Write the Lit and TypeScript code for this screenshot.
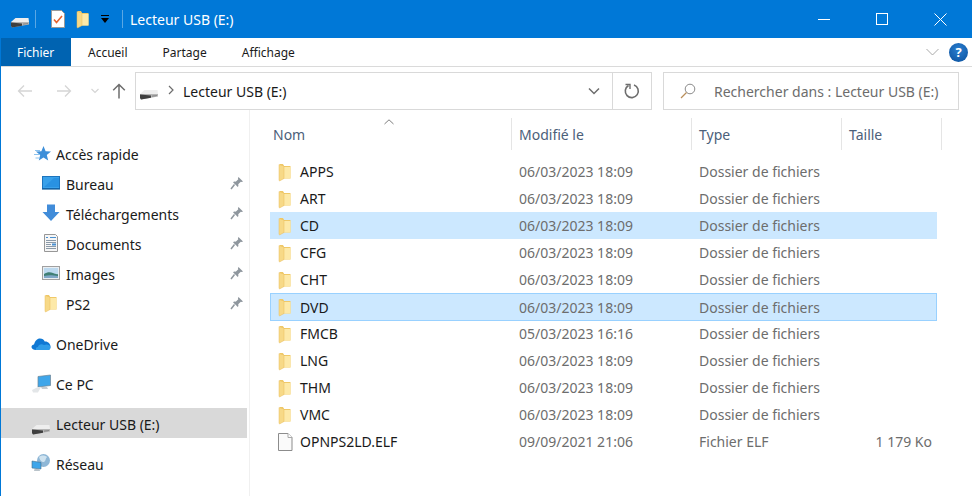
import { html, css, svg, LitElement } from "lit";
import { customElement } from "lit/decorators.js";

const driveIcon = svg`<svg class="ico" width="20" height="20" viewBox="0 0 20 20"><path d="M1 13 5.500 9H18.500l.5 4z" fill="#eeeeee"/><path d="M1 13l18 0v2.500L2 18.500 1 17z" fill="#b5b5b5"/><path d="M1 13.500l11 1v2.200L2 18.500 1 17z" fill="#3f3f3f"/><path d="M13 14.500l5-.5v1l-5 .7z" fill="#8a8a8a"/></svg>`;

const folderIcon = svg`<svg class="ico" width="14" height="20" viewBox="0 0 14 20"><path d="M2 2h3l1 2h6.500v12.500H2z" fill="#f0c968"/><path d="M6 5h6.500v11.500H6z" fill="#fde9a8"/><path d="M1 2.500 6 4v12.500L1.500 19 1 18z" fill="#f7d987"/><path d="M1 2.500 6 4v12.500L1.500 19 1 18z" fill="none" stroke="#e8bd5c" stroke-width=".5"/></svg>`;

const fileIcon = svg`<svg class="ico" width="15" height="20" viewBox="0 0 15 20"><path d="M.5 1.500h9.500l4 4v13H.5z" fill="#fafafa" stroke="#8c8c8c"/><path d="M10 1.500v4h4" fill="#fff" stroke="#a8a8a8"/></svg>`;

const pinIcon = svg`<svg width="14" height="14" viewBox="0 0 14 14"><path d="M8.500 1 13 5.500l-1.200.6-1-.4L8.200 8.300c.4 1.100.2 2-.4 2.700L3 6.200c.7-.6 1.600-.8 2.700-.4l2.600-2.600-.4-1z" fill="#8f979e"/><path d="M4.500 8.500 1 13" stroke="#8f979e" stroke-width="1.500"/></svg>`;

const navIcons: Record<string, unknown> = {
  star: svg`<svg class="ico" width="20" height="20" viewBox="0 0 20 20"><path d="M12.500 3 14.600 8.200 20 8.500 15.800 12.100 17.200 17.500 12.500 14.500 7.800 17.500 9.200 12.100 4.900 8.500 10.400 8.200z" fill="#3d8fd9"/><path d="M4 7.500h5M3 11.500h6M4.500 15h4" stroke="#8cc1ec" stroke-width="1"/></svg>`,
  desktop: svg`<svg class="ico" width="20" height="20" viewBox="0 0 20 20"><rect x="1.500" y="3.500" width="17" height="12" fill="#39a1ea" stroke="#1d74bd"/><path d="M1 16h18" stroke="#0f5c99" stroke-width="1.200"/><path d="M3 14 13 5h5v9z" fill="#1f88dc" opacity=".6"/></svg>`,
  download: svg`<svg class="ico" width="20" height="20" viewBox="0 0 20 20"><path d="M6 1.500h8V9h4.500L10 18 1.500 9H6z" fill="#418cd9"/></svg>`,
  docs: svg`<svg class="ico" width="20" height="20" viewBox="0 0 20 20"><path d="M3.500 1.500h11l2 2v15h-13z" fill="#f6f6f6" stroke="#979797"/><path d="M5 4.500h2M9 4.500h6" stroke="#4a90d0"/><path d="M5 7.500h10M5 9.500h10M5 11.500h5M5 13.500h10M5 15.500h10" stroke="#8b9aa8"/><rect x="11" y="10.500" width="4" height="2" fill="#4a90d0"/></svg>`,
  images: svg`<svg class="ico" width="20" height="20" viewBox="0 0 20 20"><rect x="1.500" y="3.500" width="17" height="13" fill="#e9eef2" stroke="#a0a0a0"/><rect x="3" y="5" width="14" height="10" fill="#bcd9ef"/><path d="M3 11c3-2 6-2.500 9-1 2 1 4 1.500 5 1v4H3z" fill="#3f7f74"/><path d="M3 13c4-1 8-1 14 0v2H3z" fill="#7fa7c7"/></svg>`,
  cloud: svg`<svg class="ico" width="20" height="20" viewBox="0 0 20 20"><path d="M5 17c-3 0-4.500-1.500-4.500-3 0-1.500 1.200-2.500 2.500-2.600C4 8 6 5.500 9 5.500c2.300 0 4 1.300 4.700 3 3.400-.3 5.800 2.500 5.800 5 0 1.800-1 3.500-3 3.500z" fill="#0f78d4"/><path d="M5 17h12.500c1.400 0 2-1.300 2-3-.5-2-3.500-3.500-6.500-2-2.500-1.500-5.500-.5-6 2-2 0-2.500 1.500-2 3z" fill="#2f9ce8"/></svg>`,
  pc: svg`<svg class="ico" width="20" height="20" viewBox="0 0 20 20"><path d="M7 3.500 19.500 2v10.500L7 14z" fill="#3fa6ea" stroke="#6d8494" stroke-width=".7"/><path d="M10 14h6l1 2h-6z" fill="#c6ccd1"/><path d="M1 17l6-3h3L7 19.500H2z" fill="#e3e6e8"/></svg>`,
  net: svg`<svg class="ico" width="20" height="20" viewBox="0 0 20 20"><circle cx="12.500" cy="7.500" r="6.500" fill="#8fb7d6"/><path d="M8 4c2-2 6-2 8 0-2 2-1 4-3 5-2 .5-4-1-5-5z" fill="#cfe3f0"/><path d="M1 8l9 1.500v6.500l-9-1z" fill="#3fa6ea" stroke="#47708c" stroke-width=".6"/><path d="M3.500 16h5l.5 2h-6z" fill="#b9c3ca"/></svg>`,
};

interface NavRow { icon: unknown; label: string; pinned?: boolean; active?: boolean; child?: boolean }

const navGroups: NavRow[][] = [
  [
    { icon: navIcons.star, label: "Accès rapide" },
    { icon: navIcons.desktop, label: "Bureau", pinned: true, child: true },
    { icon: navIcons.download, label: "Téléchargements", pinned: true, child: true },
    { icon: navIcons.docs, label: "Documents", pinned: true, child: true },
    { icon: navIcons.images, label: "Images", pinned: true, child: true },
    { icon: folderIcon, label: "PS2", pinned: true, child: true },
  ],
  [{ icon: navIcons.cloud, label: "OneDrive" }],
  [{ icon: navIcons.pc, label: "Ce PC" }],
  [{ icon: driveIcon, label: "Lecteur USB (E:)", active: true }],
  [{ icon: navIcons.net, label: "Réseau" }],
];

const folders: [string, string][] = [
  ["APPS", "06/03/2023 18:09"],
  ["ART", "06/03/2023 18:09"],
  ["CD", "06/03/2023 18:09"],
  ["CFG", "06/03/2023 18:09"],
  ["CHT", "06/03/2023 18:09"],
  ["DVD", "06/03/2023 18:09"],
  ["FMCB", "05/03/2023 16:16"],
  ["LNG", "06/03/2023 18:09"],
  ["THM", "06/03/2023 18:09"],
  ["VMC", "06/03/2023 18:09"],
];

@customElement("app-root")
export class AppRoot extends LitElement {
  static styles = css`
    :host {
      display: flex;
      flex-direction: column;
      width: 972px;
      height: 496px;
      overflow: hidden;
      background: #fff;
      box-sizing: border-box;
      border-left: 1px solid #0078d7;
      font-family: "Noto Sans", sans-serif;
      font-size: 14px;
      color: #1a1a1a;
    }

    .ico {
      display: block;
      flex-shrink: 0;
    }

    .titlebar {
      display: flex;
      align-items: center;
      height: 38px;
      flex-shrink: 0;
      background: #0078d7;
      color: #fff;
      padding-left: 9px;
    }

    .qa {
      display: flex;
      align-items: center;
    }

    .vsep {
      width: 1px;
      height: 18px;
      background: #5aa7e4;
    }

    .vsep.first {
      margin: 0 14px 0 5px;
    }

    .vsep.last {
      margin: 0 9px 0 11px;
    }

    .gap-10 {
      width: 10px;
    }

    .gap-9 {
      width: 9px;
    }

    .title {
      margin-left: -2px;
    }

    .winbtns {
      margin-left: auto;
      display: flex;
      align-items: center;
      gap: 46px;
      padding-right: 25px;
    }

    .ribbon {
      display: flex;
      align-items: stretch;
      height: 28px;
      flex-shrink: 0;
      border-bottom: 1px solid #dadada;
      font-size: 12px;
    }

    .tab {
      display: flex;
      align-items: center;
      margin-right: 35px;
    }

    .tab.file {
      width: 70px;
      box-sizing: border-box;
      padding-left: 16px;
      background: #0063b1;
      color: #fff;
      margin-right: 17px;
    }

    .ribbon-end {
      margin-left: auto;
      display: flex;
      align-items: center;
      gap: 10px;
      padding-right: 4px;
    }

    .help {
      width: 19px;
      height: 19px;
      border-radius: 50%;
      background: radial-gradient(circle at 50% 35%, #2a7fd0, #0a4f9c);
      color: #fff;
      font-size: 13px;
      font-weight: 700;
      display: flex;
      align-items: center;
      justify-content: center;
    }

    .addressbar {
      display: flex;
      align-items: center;
      height: 38px;
      flex-shrink: 0;
      padding-top: 5px;
    }

    .navbtns {
      display: flex;
      align-items: center;
      width: 134px;
      flex-shrink: 0;
      padding-left: 16px;
      box-sizing: border-box;
    }

    .address {
      width: 517px;
      height: 38px;
      box-sizing: border-box;
      border: 1px solid #d9d9d9;
      display: flex;
      align-items: center;
      padding-left: 3px;
    }

    .crumb {
      margin: -2px 0 0 9px;
    }

    .address .text {
      margin-left: 9px;
    }

    .addr-end {
      margin-left: auto;
      display: flex;
      align-items: center;
      height: 100%;
    }

    .addr-chevron {
      margin-right: 12px;
    }

    .addr-refresh {
      width: 38px;
      height: 100%;
      border-left: 1px solid #d9d9d9;
      display: flex;
      align-items: center;
      justify-content: center;
    }

    .search {
      margin-left: 11px;
      width: 296px;
      height: 38px;
      box-sizing: border-box;
      border: 1px solid #d9d9d9;
      display: flex;
      align-items: center;
      padding-left: 16px;
      color: #6d6d6d;
      gap: 18px;
    }

    .main {
      flex: 1;
      display: flex;
      min-height: 0;
    }

    .sidebar {
      width: 249px;
      flex-shrink: 0;
      box-sizing: border-box;
      border-right: 1px solid #f0f0f0;
      padding-top: 28px;
    }

    .nav-group {
      margin-bottom: 10px;
    }

    .nav-row {
      display: flex;
      align-items: center;
      height: 30px;
      width: 246px;
      box-sizing: border-box;
      padding-left: 30px;
      gap: 5px;
    }

    .nav-row.child {
      padding-left: 40px;
    }

    .nav-row.active {
      background: #d9d9d9;
    }

    .nav-icon {
      width: 20px;
      display: flex;
      justify-content: center;
      flex-shrink: 0;
    }

    .nav-row.active .nav-icon {
      margin-top: 6px;
    }

    .nav-label {
      padding-top: 2px;
    }

    .nav-row .pin {
      margin-left: auto;
      margin-right: 3px;
      display: flex;
    }

    .content {
      flex: 1;
      min-width: 0;
      padding-left: 20px;
    }

    .head {
      display: grid;
      grid-template-columns: 242px 180px 150px 100px;
      height: 32px;
      margin-top: 8px;
      margin-bottom: 8px;
      color: #4c607a;
    }

    .head > div {
      display: flex;
      align-items: center;
      padding-left: 7px;
      box-sizing: border-box;
      border-right: 1px solid #e5e5e5;
      position: relative;
    }

    .head > .col-name {
      padding-left: 3px;
    }

    .sort {
      position: absolute;
      left: 114px;
      top: 1px;
    }

    .row {
      height: 27px;
      width: 667px;
      box-sizing: border-box;
      display: grid;
      grid-template-columns: 241px 180px 150px 96px;
      align-items: center;
    }

    .row.sel {
      background: #cce8ff;
    }

    .row.focus {
      height: 28px;
      margin-bottom: -1px;
      box-shadow: inset 0 0 0 1px #99d1ff;
      position: relative;
    }

    .row .name {
      display: flex;
      align-items: center;
      gap: 8px;
      padding-left: 8px;
    }

    .file-box {
      width: 14px;
    }

    .row .muted {
      color: #6d6d6d;
      padding-left: 8px;
    }

    .row .size {
      text-align: right;
      padding-right: 5px;
      padding-left: 0;
      white-space: nowrap;
    }
  `;

  private navRow(r: NavRow) {
    const cls = `nav-row${r.child ? " child" : ""}${r.active ? " active" : ""}`;
    return html`<div class=${cls}>
      <span class="nav-icon">${r.icon}</span><span class="nav-label">${r.label}</span>
      ${r.pinned ? html`<span class="pin">${pinIcon}</span>` : null}
    </div>`;
  }

  render() {
    return html`
      <div class="titlebar">
        <div class="qa">
          ${driveIcon}
          <div class="vsep first"></div>
          <svg class="ico" width="16" height="20" viewBox="0 0 16 20"><path d="M1.500 1.500h10l3 3v14h-13z" fill="#fff" stroke="#9a9a9a"/><path d="M4 10.500l2.500 3L12 7" fill="none" stroke="#e8622c" stroke-width="1.600"/></svg>
          <span class="gap-10"></span>
          ${folderIcon}
          <span class="gap-9"></span>
          <svg class="ico" width="12" height="12" viewBox="0 0 12 12"><path d="M2 2h8v1H2z" fill="#000"/><path d="M2 5h8L6 10z" fill="#000"/></svg>
          <div class="vsep last"></div>
        </div>
        <span class="title">Lecteur USB (E:)</span>
        <div class="winbtns">
          <svg width="12" height="12" viewBox="0 0 12 12"><path d="M0 6.500h12" stroke="#fff"/></svg>
          <svg width="12" height="12" viewBox="0 0 12 12"><rect x=".5" y=".5" width="11" height="11" fill="none" stroke="#fff"/></svg>
          <svg width="13" height="13" viewBox="0 0 13 13"><path d="M.5.500l12 12M12.500.500l-12 12" stroke="#fff" stroke-width="1"/></svg>
        </div>
      </div>

      <div class="ribbon">
        <div class="tab file">Fichier</div>
        <div class="tab">Accueil</div>
        <div class="tab">Partage</div>
        <div class="tab">Affichage</div>
        <div class="ribbon-end">
          <svg width="13" height="8" viewBox="0 0 13 8"><path d="M.5 1 6.500 7 12.500 1" fill="none" stroke="#a9a9a9"/></svg>
          <div class="help">?</div>
        </div>
      </div>

      <div class="addressbar">
        <div class="navbtns">
          <svg width="16" height="14" viewBox="0 0 16 14"><path d="M15 7H1.500M7 1.500 1.500 7 7 12.500" fill="none" stroke="#d5d5d5" stroke-width="1.300"/></svg>
          <span style="width:23px"></span>
          <svg width="16" height="14" viewBox="0 0 16 14"><path d="M1 7h13.500M9 1.500 14.500 7 9 12.500" fill="none" stroke="#d5d5d5" stroke-width="1.300"/></svg>
          <span style="width:19px"></span>
          <svg width="8" height="6" viewBox="0 0 8 6"><path d="M.5 1 4 4.500 7.500 1" fill="none" stroke="#d5d5d5" stroke-width="1.200"/></svg>
          <span style="width:13px"></span>
          <svg width="14" height="16" viewBox="0 0 14 16"><path d="M7 15.500V1.500M1.200 7.300 7 1.500l5.800 5.800" fill="none" stroke="#6d6d6d" stroke-width="1.500"/></svg>
        </div>
        <div class="address">
          ${driveIcon}
          <svg class="crumb" width="6" height="10" viewBox="0 0 6 10"><path d="M1 1l4 4-4 4" fill="none" stroke="#6d6d6d" stroke-width="1.200"/></svg>
          <span class="text">Lecteur USB (E:)</span>
          <div class="addr-end">
            <svg class="addr-chevron" width="12" height="8" viewBox="0 0 12 8"><path d="M1 1.500 6 6.500l5-5" fill="none" stroke="#6d6d6d" stroke-width="1.500"/></svg>
            <div class="addr-refresh">
              <svg width="16" height="16" viewBox="0 0 16 16"><path d="M4.500 2.500A6.500 6.500 0 1 0 10 2" fill="none" stroke="#6d6d6d" stroke-width="1.600"/><path d="M1.500 1.500h4.500v4.500" fill="none" stroke="#6d6d6d" stroke-width="1.400"/></svg>
            </div>
          </div>
        </div>
        <div class="search">
          <svg width="16" height="16" viewBox="0 0 16 16"><circle cx="10" cy="6" r="4.800" fill="none" stroke="#8a8a8a"/><path d="M6.500 9.500 1 15" stroke="#b98e5a" stroke-width="1.200"/></svg>
          <span>Rechercher dans : Lecteur USB (E:)</span>
        </div>
      </div>

      <div class="main">
        <nav class="sidebar">
          ${navGroups.map(
            (g) => html`<div class="nav-group">${g.map((r) => this.navRow(r))}</div>`
          )}
        </nav>
        <section class="content">
          <div class="head">
            <div class="col-name">
              Nom
              <svg class="sort" width="10" height="6" viewBox="0 0 10 6"><path d="M.5 5 5 .8 9.500 5" fill="none" stroke="#7d7d7d"/></svg>
            </div>
            <div>Modifié le</div>
            <div>Type</div>
            <div>Taille</div>
          </div>
          ${folders.map(
            ([name, date]) => html`<div
              class="row ${name === "CD" || name === "DVD" ? "sel" : ""} ${name === "DVD" ? "focus" : ""}"
            >
              <div class="name">${folderIcon}<span>${name}</span></div>
              <div class="muted">${date}</div>
              <div class="muted">Dossier de fichiers</div>
              <div></div>
            </div>`
          )}
          <div class="row">
            <div class="name"><span class="file-box">${fileIcon}</span><span>OPNPS2LD.ELF</span></div>
            <div class="muted">09/09/2021 21:06</div>
            <div class="muted">Fichier ELF</div>
            <div class="muted size">1 179 Ko</div>
          </div>
        </section>
      </div>
    `;
  }
}

declare global {
  interface HTMLElementTagNameMap {
    "app-root": AppRoot;
  }
}
